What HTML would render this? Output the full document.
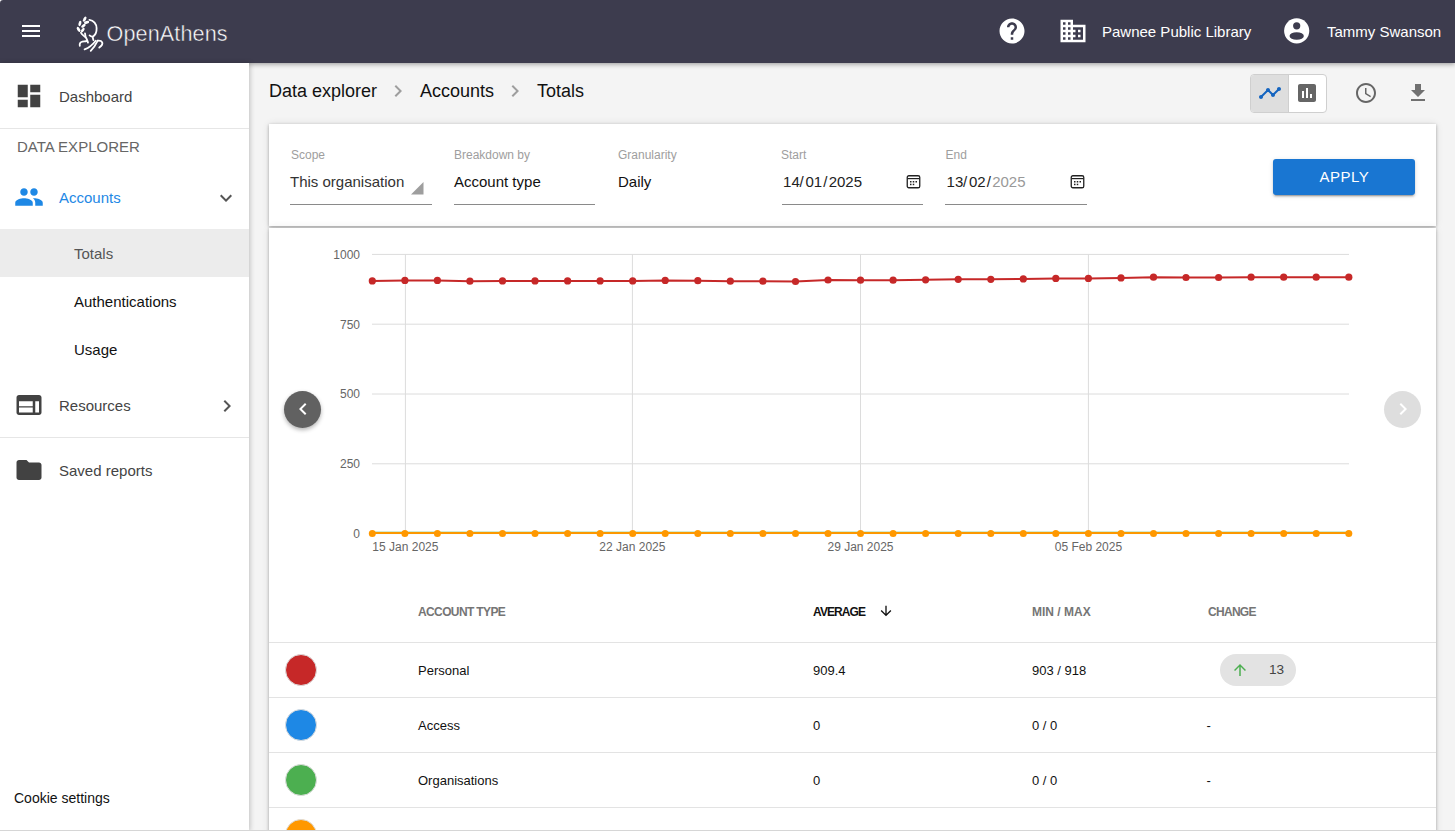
<!DOCTYPE html>
<html><head><meta charset="utf-8">
<style>
*{box-sizing:border-box;margin:0;padding:0}
html,body{width:1455px;height:831px;overflow:hidden;background:#f4f4f4;font-family:"Liberation Sans",sans-serif;}
.a{position:absolute;white-space:nowrap;line-height:1}
svg{position:absolute;display:block}
#hdr{position:absolute;left:0;top:0;width:1455px;height:63px;background:#3d3c4e;box-shadow:0 1px 5px rgba(0,0,0,.4);z-index:2}
#side{position:absolute;left:0;top:63px;width:249px;height:768px;background:#fff;box-shadow:1px 0 5px rgba(0,0,0,.22);z-index:3}
.card{position:absolute;background:#fff;box-shadow:0 1px 3px rgba(0,0,0,.3),0 0 8px rgba(0,0,0,.09)}
.hl{position:absolute;height:1px;background:#e3e3e3}
</style></head><body>

<div id="hdr">
  <svg style="left:19px;top:19px" width="24" height="24" viewBox="0 0 24 24"><path fill="#fff" d="M3 18h18v-2H3v2zm0-5h18v-2H3v2zm0-7v2h18V6H3z"/></svg>
  <svg style="left:72px;top:14px" width="36" height="40" viewBox="72 14 36 40"><g fill="none" stroke="#fff" stroke-width="1.8" stroke-linecap="round">
<path d="M89.4 19.9C93.6 20.4 96.6 24 96.6 28.3C96.7 31.5 95.8 34.6 93.1 36.4C91.8 36.9 90.6 36.3 89.6 35.4"/>
<path d="M92.7 37.2L93.4 40.1"/>
<path d="M80.9 32.7C82 35 84.8 36.3 86.2 38C87.1 39.5 87.4 41 88 42.6"/>
<path d="M85 33.3L85.7 37.4"/>
<path d="M79.8 45.8C79.3 43.6 80.4 42 82.4 41.6C84 41.3 85.6 41.6 86.9 40.9"/>
<path d="M84.6 49.4C88.3 48 92.6 45 95.7 40.8"/>
<path d="M90.7 50.9C93.2 48.2 95.6 45 97.6 40.8"/>
<path d="M99.3 47.6C101.1 46.3 103 44.4 102.2 42.3C101.5 40.8 99.6 40.4 97.7 40.6"/>
</g><g fill="#fff">
<ellipse cx="84.7" cy="19.1" rx="2.8" ry="1.4" transform="rotate(-62 84.7 19.1)"/>
<ellipse cx="86.6" cy="22.4" rx="2.7" ry="1.35" transform="rotate(-15 86.6 22.4)"/>
<ellipse cx="79.9" cy="23.5" rx="2.8" ry="1.4" transform="rotate(-75 79.9 23.5)"/>
<ellipse cx="83.4" cy="25.8" rx="2.6" ry="1.35" transform="rotate(-35 83.4 25.8)"/>
<ellipse cx="78.6" cy="29.4" rx="2.8" ry="1.4" transform="rotate(58 78.6 29.4)"/>
<ellipse cx="82.8" cy="30.1" rx="2.6" ry="1.35" transform="rotate(-55 82.8 30.1)"/>
</g></svg>
  <svg style="left:100px;top:14px" width="140" height="40" viewBox="100 14 140 40"><text x="106.6" y="41.1" font-size="21.6" fill="#fff" stroke="#3d3c4e" stroke-width="0.45" letter-spacing="0.1">OpenAthens</text></svg>
  <svg style="left:997.1px;top:16px" width="30" height="30" viewBox="0 0 24 24"><path fill="#fff" d="M12 2C6.48 2 2 6.48 2 12s4.48 10 10 10 10-4.48 10-10S17.52 2 12 2zm1 17h-2v-2h2v2zm2.07-7.750l-.9.92C13.45 12.9 13 13.5 13 15h-2v-.5c0-1.1.45-2.1 1.170-2.830l1.24-1.26c.37-.36.59-.86.59-1.41 0-1.1-.9-2-2-2s-2 .9-2 2H8c0-2.21 1.79-4 4-4s4 1.79 4 4c0 .88-.36 1.680-.93 2.250z"/></svg>
  <svg style="left:1057.9px;top:16.2px" width="30" height="30" viewBox="0 0 24 24"><path fill="#fff" d="M12 7V3H2v18h20V7H12zM6 19H4v-2h2v2zm0-4H4v-2h2v2zm0-4H4V9h2v2zm0-4H4V5h2v2zm4 12H8v-2h2v2zm0-4H8v-2h2v2zm0-4H8V9h2v2zm0-4H8V5h2v2zm10 12h-8v-2h2v-2h-2v-2h2v-2h-2V9h8v10zm-2-8h-2v2h2v-2zm0 4h-2v2h2v-2z"/></svg>
  <div class="a" style="left:1102px;top:24.3px;font-size:15px;color:#fff">Pawnee Public Library</div>
  <svg style="left:1281px;top:15px" width="32" height="32" viewBox="1281 15 32 32"><circle cx="1296.7" cy="30.8" r="12.6" fill="#fff"/><circle cx="1296.7" cy="25.8" r="3.6" fill="#3d3c4e"/><ellipse cx="1296.7" cy="36" rx="7.15" ry="3.8" fill="#3d3c4e"/></svg>
  <div class="a" style="left:1327px;top:24.3px;font-size:15px;color:#fff">Tammy Swanson</div>
</div>

<div id="side">
  <svg style="left:14px;top:18px" width="30" height="30" viewBox="0 0 24 24"><path fill="#424242" d="M3 13h8V3H3v10zm0 8h8v-6H3v6zm10 0h8V11h-8v10zm0-18v6h8V3h-8z"/></svg>
  <div class="a" style="left:59px;top:26.1px;font-size:15px;color:#444">Dashboard</div>
  <div class="hl" style="left:0;top:65px;width:249px;background:#e6e6e6"></div>
  <div class="a" style="left:17px;top:75.6px;font-size:15px;color:#666">DATA EXPLORER</div>
  <svg style="left:14px;top:119px" width="30" height="30" viewBox="0 0 24 24"><path fill="#1e88e5" d="M16 11c1.66 0 2.99-1.34 2.99-3S17.66 5 16 5c-1.66 0-3 1.34-3 3s1.34 3 3 3zm-8 0c1.66 0 2.99-1.34 2.99-3S9.66 5 8 5C6.34 5 5 6.34 5 8s1.34 3 3 3zm0 2c-2.330 0-7 1.17-7 3.5V19h14v-2.5c0-2.33-4.67-3.5-7-3.5zm8 0c-.29 0-.62.02-.97.05 1.160.84 1.97 1.97 1.97 3.45V19h6v-2.5c0-2.33-4.67-3.5-7-3.5z"/></svg>
  <div class="a" style="left:59px;top:127.4px;font-size:15px;color:#1e88e5">Accounts</div>
  <svg style="left:214px;top:123px" width="24" height="24" viewBox="0 0 24 24"><path fill="#555" d="M16.59 8.59L12 13.17 7.41 8.59 6 10l6 6 6-6z"/></svg>
  <div style="position:absolute;left:0;top:166px;width:249px;height:48px;background:#ececec"></div>
  <div class="a" style="left:74px;top:182.8px;font-size:15px;color:#555">Totals</div>
  <div class="a" style="left:74px;top:231px;font-size:15px;color:#111">Authentications</div>
  <div class="a" style="left:74px;top:278.7px;font-size:15px;color:#111">Usage</div>
  <svg style="left:14px;top:327px" width="30" height="30" viewBox="0 0 24 24"><path fill="#424242" d="M20 4H4c-1.1 0-1.99.9-1.99 2L2 18c0 1.1.9 2 2 2h16c1.1 0 2-.9 2-2V6c0-1.1-.9-2-2-2zm-5 14H4v-4h11v4zm0-5H4V9h11v4zm5 5h-3V9h3v9z"/></svg>
  <div class="a" style="left:59px;top:335.3px;font-size:15px;color:#444">Resources</div>
  <svg style="left:215px;top:331px" width="24" height="24" viewBox="0 0 24 24"><path fill="#555" d="M10 6L8.59 7.41 13.17 12l-4.58 4.59L10 18l6-6z"/></svg>
  <div class="hl" style="left:0;top:374px;width:249px;background:#e6e6e6"></div>
  <svg style="left:14px;top:392px" width="30" height="30" viewBox="0 0 24 24"><path fill="#424242" d="M10 4H4c-1.1 0-1.99.9-1.99 2L2 18c0 1.1.9 2 2 2h16c1.1 0 2-.9 2-2V8c0-1.1-.9-2-2-2h-8l-2-2z"/></svg>
  <div class="a" style="left:59px;top:399.7px;font-size:15px;color:#444">Saved reports</div>
  <div class="a" style="left:14px;top:728.1px;font-size:14px;color:#111">Cookie settings</div>
</div>

<div id="main">
  <div class="a" style="left:269px;top:82.2px;font-size:18px;color:#111">Data explorer</div>
  <svg style="left:385.5px;top:79px" width="24" height="24" viewBox="0 0 24 24"><path fill="#9e9e9e" d="M10 6L8.59 7.41 13.17 12l-4.58 4.59L10 18l6-6z"/></svg>
  <div class="a" style="left:420px;top:82.2px;font-size:18px;color:#111">Accounts</div>
  <svg style="left:502.5px;top:79px" width="24" height="24" viewBox="0 0 24 24"><path fill="#9e9e9e" d="M10 6L8.59 7.41 13.17 12l-4.58 4.59L10 18l6-6z"/></svg>
  <div class="a" style="left:537px;top:82.2px;font-size:18px;color:#111">Totals</div>

  <div style="position:absolute;left:1250px;top:74px;width:77px;height:39px;border:1px solid #cfcfcf;border-radius:4px;background:#fff;overflow:hidden">
    <div style="position:absolute;left:0;top:0;width:38px;height:37px;background:#dedede;border-right:1px solid #cfcfcf"></div>
  </div>
  <svg style="left:1257.5px;top:81.2px" width="24" height="24" viewBox="0 0 24 24"><path fill="#1565c0" d="M23 8c0 1.1-.9 2-2 2-.18 0-.35-.02-.51-.07l-3.560 3.550c.05.16.07.34.07.52 0 1.1-.9 2-2 2s-2-.9-2-2c0-.18.02-.36.07-.52l-2.550-2.550c-.16.05-.34.07-.52.07s-.36-.02-.52-.07l-4.550 4.560c.05.16.07.33.07.51 0 1.1-.9 2-2 2s-2-.9-2-2 .9-2 2-2c.18 0 .35.02.51.07l4.560-4.550C8.02 9.36 8 9.18 8 9c0-1.1.9-2 2-2s2 .9 2 2c0 .18-.02.36-.07.52l2.550 2.550c.16-.05.34-.07.52-.07s.36.02.52.07l3.550-3.560C19.020 8.350 19 8.180 19 8c0-1.1.9-2 2-2s2 .9 2 2z"/></svg>
  <svg style="left:1295.4px;top:80.9px" width="24" height="24" viewBox="0 0 24 24"><path fill="#666" d="M19 3H5c-1.1 0-2 .9-2 2v14c0 1.1.9 2 2 2h14c1.1 0 2-.9 2-2V5c0-1.1-.9-2-2-2zM9 17H7v-7h2v7zm4 0h-2V7h2v10zm4 0h-2v-4h2v4z"/></svg>
  <svg style="left:1353.5px;top:81px" width="24" height="24" viewBox="0 0 24 24"><path fill="#666" d="M11.99 2C6.47 2 2 6.48 2 12s4.47 10 9.99 10C17.52 22 22 17.52 22 12S17.52 2 11.99 2zM12 20c-4.42 0-8-3.58-8-8s3.58-8 8-8 8 3.58 8 8-3.58 8-8 8zm.5-13H11v6l5.25 3.15.75-1.230-4.5-2.670z"/></svg>
  <svg style="left:1405.7px;top:80.9px" width="24" height="24" viewBox="0 0 24 24"><path fill="#707070" d="M19 9h-4V3H9v6H5l7 7 7-7zM5 18v2h14v-2H5z"/></svg>

  <div class="card" style="left:269px;top:124px;width:1167px;height:102px">
  </div>
  <div class="a" style="left:291px;top:149px;font-size:12px;color:#9e9e9e">Scope</div>
  <div class="a" style="left:454px;top:149px;font-size:12px;color:#9e9e9e">Breakdown by</div>
  <div class="a" style="left:618px;top:149px;font-size:12px;color:#9e9e9e">Granularity</div>
  <div class="a" style="left:781px;top:149px;font-size:12px;color:#9e9e9e">Start</div>
  <div class="a" style="left:945.5px;top:149px;font-size:12px;color:#9e9e9e">End</div>
  <div class="a" style="left:290px;top:174.4px;font-size:15px;color:#333">This organisation</div>
  <div class="a" style="left:454px;top:174.4px;font-size:15px;color:#111">Account type</div>
  <div class="a" style="left:618px;top:174.4px;font-size:15px;color:#111">Daily</div>
  <div class="a" style="left:783.1px;top:174.4px;font-size:15px;color:#222">14</div>
  <div class="a" style="left:799.5px;top:174.4px;font-size:15px;color:#222">/</div>
  <div class="a" style="left:805.5px;top:174.4px;font-size:15px;color:#222">01</div>
  <div class="a" style="left:823.3px;top:174.4px;font-size:15px;color:#222">/</div>
  <div class="a" style="left:828.7px;top:174.4px;font-size:15px;color:#222">2025</div>
  <div class="a" style="left:946.6px;top:174.4px;font-size:15px;color:#222">13</div>
  <div class="a" style="left:963.0px;top:174.4px;font-size:15px;color:#222">/</div>
  <div class="a" style="left:969.0px;top:174.4px;font-size:15px;color:#222">02</div>
  <div class="a" style="left:986.8px;top:174.4px;font-size:15px;color:#222">/</div>
  <div class="a" style="left:992.2px;top:174.4px;font-size:15px;color:#999">2025</div>
  <svg style="left:411px;top:182px" width="12.5" height="12.5" viewBox="0 0 12 12"><path fill="#9e9e9e" d="M12 0V12H0z"/></svg>
  <div class="hl" style="left:290px;top:204px;width:142px;background:#8a8a8a"></div>
  <div class="hl" style="left:454px;top:204px;width:141px;background:#8a8a8a"></div>
  <div class="hl" style="left:782px;top:204px;width:141px;background:#8a8a8a"></div>
  <div class="hl" style="left:945px;top:204px;width:142px;background:#8a8a8a"></div>
  <svg style="left:906px;top:173.5px" width="15" height="15" viewBox="0 0 15 15"><rect x="1.25" y="1.75" width="12.5" height="12" rx="1.6" fill="none" stroke="#222" stroke-width="1.3"/><path d="M1.5 4.6h12" stroke="#222" stroke-width="1.2"/><rect x="4" y="7" width="1.5" height="1.5" fill="#222"/><rect x="6.75" y="7" width="1.5" height="1.5" fill="#222"/><rect x="9.5" y="7" width="1.5" height="1.5" fill="#222"/><rect x="4" y="9.7" width="1.5" height="1.5" fill="#222"/><rect x="6.75" y="9.7" width="1.5" height="1.5" fill="#222"/></svg>
  <svg style="left:1070px;top:173.5px" width="15" height="15" viewBox="0 0 15 15"><rect x="1.25" y="1.75" width="12.5" height="12" rx="1.6" fill="none" stroke="#222" stroke-width="1.3"/><path d="M1.5 4.6h12" stroke="#222" stroke-width="1.2"/><rect x="4" y="7" width="1.5" height="1.5" fill="#222"/><rect x="6.75" y="7" width="1.5" height="1.5" fill="#222"/><rect x="9.5" y="7" width="1.5" height="1.5" fill="#222"/><rect x="4" y="9.7" width="1.5" height="1.5" fill="#222"/><rect x="6.75" y="9.7" width="1.5" height="1.5" fill="#222"/></svg>
  <div style="position:absolute;left:1273px;top:159px;width:142px;height:36px;background:#1976d2;border-radius:3px;box-shadow:0 3px 1px -2px rgba(0,0,0,.2),0 2px 2px 0 rgba(0,0,0,.14),0 1px 5px 0 rgba(0,0,0,.12)"></div>
  <div class="a" style="left:1319.5px;top:168.6px;font-size:15px;color:#fff;letter-spacing:.5px">APPLY</div>
  <div class="card" style="left:269px;top:228px;width:1167px;height:620px">
  </div>
<svg style="left:269px;top:228px" width="1167" height="360" viewBox="269 228 1167 360">
<path d="M372 254.4H1349" stroke="#dcdcdc" stroke-width="1"/>
<path d="M372 324.2H1349" stroke="#dcdcdc" stroke-width="1"/>
<path d="M372 394.0H1349" stroke="#dcdcdc" stroke-width="1"/>
<path d="M372 463.8H1349" stroke="#dcdcdc" stroke-width="1"/>
<path d="M405.4 254.4V533.6" stroke="#dcdcdc" stroke-width="1"/>
<path d="M632.4 254.4V533.6" stroke="#dcdcdc" stroke-width="1"/>
<path d="M860.5 254.4V533.6" stroke="#dcdcdc" stroke-width="1"/>
<path d="M1088.4 254.4V533.6" stroke="#dcdcdc" stroke-width="1"/>
<path d="M372 533.6H1349" stroke="#dcdcdc" stroke-width="1"/>
<text x="360" y="258.7" text-anchor="end" font-size="12" fill="#666">1000</text>
<text x="360" y="328.5" text-anchor="end" font-size="12" fill="#666">750</text>
<text x="360" y="398.3" text-anchor="end" font-size="12" fill="#666">500</text>
<text x="360" y="468.1" text-anchor="end" font-size="12" fill="#666">250</text>
<text x="360" y="537.9" text-anchor="end" font-size="12" fill="#666">0</text>
<text x="405.4" y="551" text-anchor="middle" font-size="12" fill="#666">15 Jan 2025</text>
<text x="632.4" y="551" text-anchor="middle" font-size="12" fill="#666">22 Jan 2025</text>
<text x="860.5" y="551" text-anchor="middle" font-size="12" fill="#666">29 Jan 2025</text>
<text x="1088.4" y="551" text-anchor="middle" font-size="12" fill="#666">05 Feb 2025</text>
<path d="M372.3 533H1348.8" stroke="#1e88e5" stroke-width="2"/>
<path d="M372.3 532.6H1348.8" stroke="#4caf50" stroke-width="1.8"/>
<polyline points="372.3,280.9 404.9,280.4 437.4,280.4 469.9,281.2 502.5,280.9 535.0,280.9 567.6,280.9 600.1,280.9 632.7,280.9 665.2,280.4 697.8,280.7 730.3,281.2 762.9,281.2 795.5,281.5 828.0,280.0 860.5,280.2 893.1,280.2 925.6,279.8 958.2,279.3 990.8,279.3 1023.3,278.9 1055.8,278.4 1088.4,278.4 1121.0,277.9 1153.5,277.2 1186.0,277.5 1218.6,277.5 1251.1,277.2 1283.7,277.2 1316.2,277.2 1348.8,277.2" fill="none" stroke="#c62828" stroke-width="2"/>
<circle cx="372.3" cy="280.9" r="3.6" fill="#c62828"/>
<circle cx="404.9" cy="280.4" r="3.6" fill="#c62828"/>
<circle cx="437.4" cy="280.4" r="3.6" fill="#c62828"/>
<circle cx="469.9" cy="281.2" r="3.6" fill="#c62828"/>
<circle cx="502.5" cy="280.9" r="3.6" fill="#c62828"/>
<circle cx="535.0" cy="280.9" r="3.6" fill="#c62828"/>
<circle cx="567.6" cy="280.9" r="3.6" fill="#c62828"/>
<circle cx="600.1" cy="280.9" r="3.6" fill="#c62828"/>
<circle cx="632.7" cy="280.9" r="3.6" fill="#c62828"/>
<circle cx="665.2" cy="280.4" r="3.6" fill="#c62828"/>
<circle cx="697.8" cy="280.7" r="3.6" fill="#c62828"/>
<circle cx="730.3" cy="281.2" r="3.6" fill="#c62828"/>
<circle cx="762.9" cy="281.2" r="3.6" fill="#c62828"/>
<circle cx="795.5" cy="281.5" r="3.6" fill="#c62828"/>
<circle cx="828.0" cy="280.0" r="3.6" fill="#c62828"/>
<circle cx="860.5" cy="280.2" r="3.6" fill="#c62828"/>
<circle cx="893.1" cy="280.2" r="3.6" fill="#c62828"/>
<circle cx="925.6" cy="279.8" r="3.6" fill="#c62828"/>
<circle cx="958.2" cy="279.3" r="3.6" fill="#c62828"/>
<circle cx="990.8" cy="279.3" r="3.6" fill="#c62828"/>
<circle cx="1023.3" cy="278.9" r="3.6" fill="#c62828"/>
<circle cx="1055.8" cy="278.4" r="3.6" fill="#c62828"/>
<circle cx="1088.4" cy="278.4" r="3.6" fill="#c62828"/>
<circle cx="1121.0" cy="277.9" r="3.6" fill="#c62828"/>
<circle cx="1153.5" cy="277.2" r="3.6" fill="#c62828"/>
<circle cx="1186.0" cy="277.5" r="3.6" fill="#c62828"/>
<circle cx="1218.6" cy="277.5" r="3.6" fill="#c62828"/>
<circle cx="1251.1" cy="277.2" r="3.6" fill="#c62828"/>
<circle cx="1283.7" cy="277.2" r="3.6" fill="#c62828"/>
<circle cx="1316.2" cy="277.2" r="3.6" fill="#c62828"/>
<circle cx="1348.8" cy="277.2" r="3.6" fill="#c62828"/>
<path d="M372.3 533H1348.8" stroke="#fb9800" stroke-width="2"/>
<circle cx="372.3" cy="533.4" r="3.5" fill="#ff9800"/>
<circle cx="404.9" cy="533.4" r="3.5" fill="#ff9800"/>
<circle cx="437.4" cy="533.4" r="3.5" fill="#ff9800"/>
<circle cx="469.9" cy="533.4" r="3.5" fill="#ff9800"/>
<circle cx="502.5" cy="533.4" r="3.5" fill="#ff9800"/>
<circle cx="535.0" cy="533.4" r="3.5" fill="#ff9800"/>
<circle cx="567.6" cy="533.4" r="3.5" fill="#ff9800"/>
<circle cx="600.1" cy="533.4" r="3.5" fill="#ff9800"/>
<circle cx="632.7" cy="533.4" r="3.5" fill="#ff9800"/>
<circle cx="665.2" cy="533.4" r="3.5" fill="#ff9800"/>
<circle cx="697.8" cy="533.4" r="3.5" fill="#ff9800"/>
<circle cx="730.3" cy="533.4" r="3.5" fill="#ff9800"/>
<circle cx="762.9" cy="533.4" r="3.5" fill="#ff9800"/>
<circle cx="795.5" cy="533.4" r="3.5" fill="#ff9800"/>
<circle cx="828.0" cy="533.4" r="3.5" fill="#ff9800"/>
<circle cx="860.5" cy="533.4" r="3.5" fill="#ff9800"/>
<circle cx="893.1" cy="533.4" r="3.5" fill="#ff9800"/>
<circle cx="925.6" cy="533.4" r="3.5" fill="#ff9800"/>
<circle cx="958.2" cy="533.4" r="3.5" fill="#ff9800"/>
<circle cx="990.8" cy="533.4" r="3.5" fill="#ff9800"/>
<circle cx="1023.3" cy="533.4" r="3.5" fill="#ff9800"/>
<circle cx="1055.8" cy="533.4" r="3.5" fill="#ff9800"/>
<circle cx="1088.4" cy="533.4" r="3.5" fill="#ff9800"/>
<circle cx="1121.0" cy="533.4" r="3.5" fill="#ff9800"/>
<circle cx="1153.5" cy="533.4" r="3.5" fill="#ff9800"/>
<circle cx="1186.0" cy="533.4" r="3.5" fill="#ff9800"/>
<circle cx="1218.6" cy="533.4" r="3.5" fill="#ff9800"/>
<circle cx="1251.1" cy="533.4" r="3.5" fill="#ff9800"/>
<circle cx="1283.7" cy="533.4" r="3.5" fill="#ff9800"/>
<circle cx="1316.2" cy="533.4" r="3.5" fill="#ff9800"/>
<circle cx="1348.8" cy="533.4" r="3.5" fill="#ff9800"/>
</svg>
  <div style="position:absolute;left:284px;top:390.6px;width:37px;height:37px;border-radius:50%;background:#616161;box-shadow:0 2px 4px rgba(0,0,0,.3)"></div>
  <svg style="left:290.5px;top:397px" width="24" height="24" viewBox="0 0 24 24"><path fill="#fff" d="M15.41 7.41L14 6l-6 6 6 6 1.41-1.41L10.83 12z"/></svg>
  <div style="position:absolute;left:1384px;top:390.5px;width:37px;height:37px;border-radius:50%;background:#dedede"></div>
  <svg style="left:1391px;top:397px" width="24" height="24" viewBox="0 0 24 24"><path fill="#fff" d="M10 6L8.59 7.41 13.17 12l-4.58 4.59L10 18l6-6z"/></svg>

  <div class="a" style="left:418px;top:606.3px;font-size:12px;font-weight:bold;color:#757575;letter-spacing:-.62px">ACCOUNT TYPE</div>
  <div class="a" style="left:813px;top:606.3px;font-size:12px;font-weight:bold;color:#111;letter-spacing:-.9px">AVERAGE</div>
  <svg style="left:877.5px;top:603px" width="16" height="16" viewBox="0 0 24 24"><path fill="#111" d="M20 12l-1.41-1.41L13 16.17V4h-2v12.17l-5.58-5.59L4 12l8 8 8-8z"/></svg>
  <div class="a" style="left:1032px;top:606.3px;font-size:12px;font-weight:bold;color:#757575;letter-spacing:0px">MIN / MAX</div>
  <div class="a" style="left:1208px;top:606.3px;font-size:12px;font-weight:bold;color:#757575;letter-spacing:-.7px">CHANGE</div>
  <div class="hl" style="left:269px;top:642px;width:1167px"></div>
  <div class="hl" style="left:269px;top:697px;width:1167px"></div>
  <div class="hl" style="left:269px;top:752px;width:1167px"></div>
  <div class="hl" style="left:269px;top:807px;width:1167px"></div>

  <div style="position:absolute;left:285px;top:653.8px;width:32px;height:32px;border-radius:50%;background:#c62828;border:1px solid #ddd"></div>
  <div style="position:absolute;left:285px;top:708.8px;width:32px;height:32px;border-radius:50%;background:#1e88e5;border:1px solid #ddd"></div>
  <div style="position:absolute;left:285px;top:763.8px;width:32px;height:32px;border-radius:50%;background:#4caf50;border:1px solid #ddd"></div>
  <div style="position:absolute;left:285px;top:818.8px;width:32px;height:32px;border-radius:50%;background:#ff9800;border:1px solid #ddd"></div>

  <div class="a" style="left:418px;top:663.7px;font-size:13px;color:#111">Personal</div>
  <div class="a" style="left:813px;top:663.7px;font-size:13px;color:#111">909.4</div>
  <div class="a" style="left:1032px;top:663.7px;font-size:13px;color:#111">903 / 918</div>
  <div style="position:absolute;left:1220px;top:654px;width:76px;height:32px;border-radius:16px;background:#e3e3e3"></div>
  <svg style="left:1230.8px;top:661px" width="18" height="18" viewBox="0 0 24 24"><path fill="#4caf50" d="M4 12l1.41 1.41L11 7.83V20h2V7.83l5.58 5.59L20 12l-8-8-8 8z"/></svg>
  <div class="a" style="left:1269px;top:662.6px;font-size:13.6px;color:#444">13</div>

  <div class="a" style="left:418px;top:718.7px;font-size:13px;color:#111">Access</div>
  <div class="a" style="left:813px;top:718.7px;font-size:13px;color:#111">0</div>
  <div class="a" style="left:1032px;top:718.7px;font-size:13px;color:#111">0 / 0</div>
  <div class="a" style="left:1206.5px;top:718.7px;font-size:13px;color:#111">-</div>

  <div class="a" style="left:418px;top:773.7px;font-size:13px;color:#111">Organisations</div>
  <div class="a" style="left:813px;top:773.7px;font-size:13px;color:#111">0</div>
  <div class="a" style="left:1032px;top:773.7px;font-size:13px;color:#111">0 / 0</div>
  <div class="a" style="left:1206.5px;top:773.7px;font-size:13px;color:#111">-</div>

</div>

<div style="position:absolute;left:0;top:830px;width:1455px;height:1px;background:#d6d6d6;z-index:5"></div>
<svg style="left:0;top:0;z-index:6" width="4" height="4" viewBox="0 0 4 4"><path d="M0 0H3.2A3.2 3.2 0 0 0 0 3.2Z" fill="#fff"/></svg>
</body></html>
